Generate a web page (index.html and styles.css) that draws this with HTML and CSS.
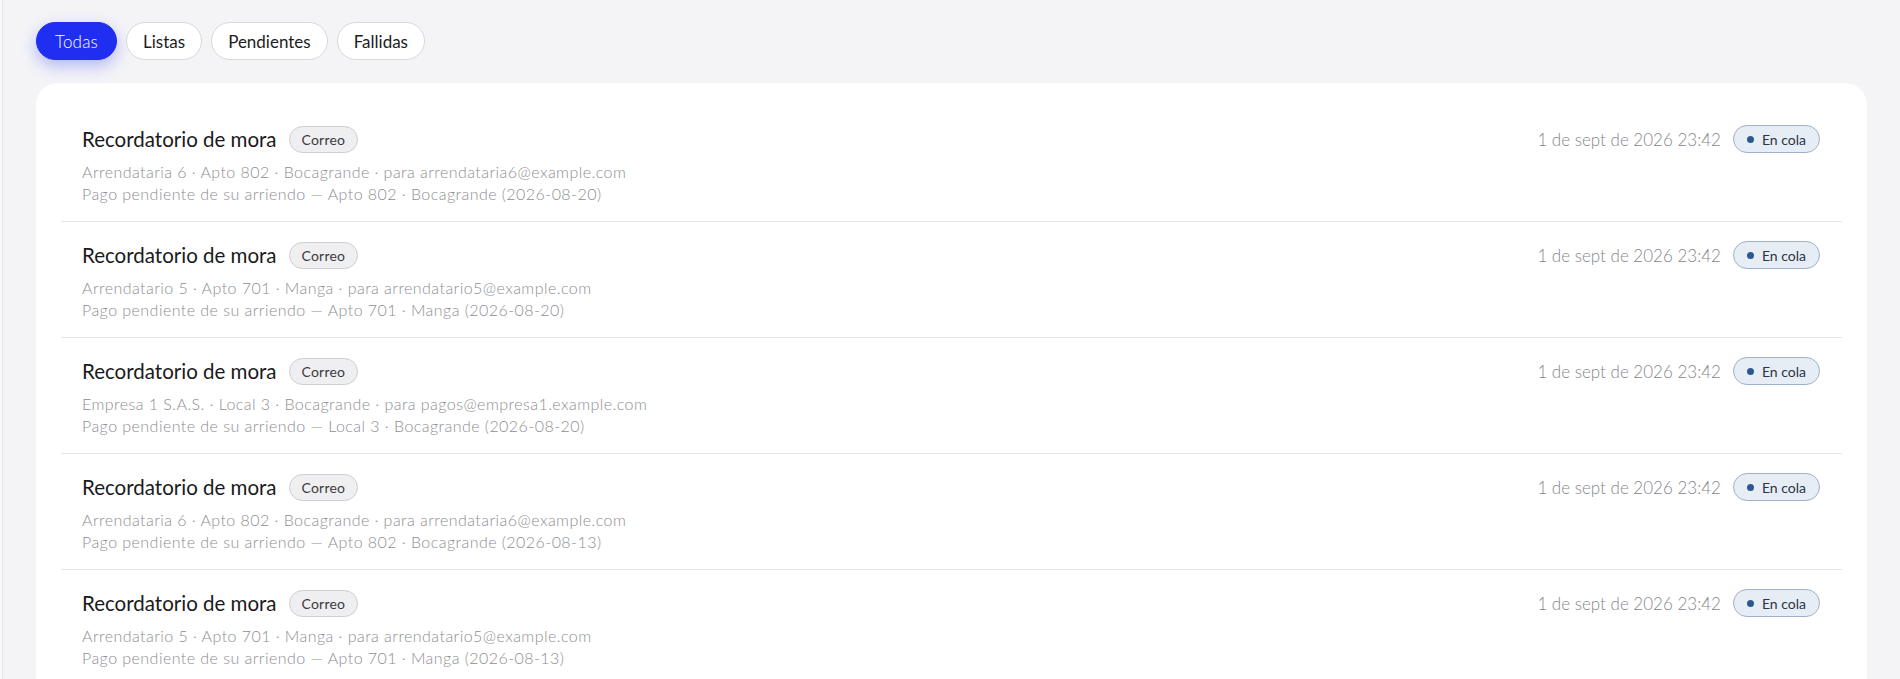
FILE: index.html
```html
<!DOCTYPE html>
<html lang="es">
<head>
<meta charset="utf-8">
<title>Notificaciones</title>
<link rel="stylesheet" href="styles.css">
</head>
<body>
<div class="app">
  <div class="edge"></div>
  <main class="main">
    <nav class="filters">
      <button class="chip chip-active">Todas</button>
      <button class="chip">Listas</button>
      <button class="chip">Pendientes</button>
      <button class="chip">Fallidas</button>
    </nav>
    <section class="card">
      <article class="row">
        <div class="row-main">
          <div class="title-line"><span class="title">Recordatorio de mora</span><span class="tag">Correo</span></div>
          <div class="meta">Arrendataria 6 · Apto 802 · Bocagrande · para arrendataria6@example.com</div>
          <div class="meta">Pago pendiente de su arriendo — Apto 802 · Bocagrande (2026-08-20)</div>
        </div>
        <div class="row-side"><span class="date">1 de sept de 2026 23:42</span><span class="status"><span class="dot"></span>En cola</span></div>
      </article>
      <article class="row">
        <div class="row-main">
          <div class="title-line"><span class="title">Recordatorio de mora</span><span class="tag">Correo</span></div>
          <div class="meta">Arrendatario 5 · Apto 701 · Manga · para arrendatario5@example.com</div>
          <div class="meta">Pago pendiente de su arriendo — Apto 701 · Manga (2026-08-20)</div>
        </div>
        <div class="row-side"><span class="date">1 de sept de 2026 23:42</span><span class="status"><span class="dot"></span>En cola</span></div>
      </article>
      <article class="row">
        <div class="row-main">
          <div class="title-line"><span class="title">Recordatorio de mora</span><span class="tag">Correo</span></div>
          <div class="meta">Empresa 1 S.A.S. · Local 3 · Bocagrande · para pagos@empresa1.example.com</div>
          <div class="meta">Pago pendiente de su arriendo — Local 3 · Bocagrande (2026-08-20)</div>
        </div>
        <div class="row-side"><span class="date">1 de sept de 2026 23:42</span><span class="status"><span class="dot"></span>En cola</span></div>
      </article>
      <article class="row">
        <div class="row-main">
          <div class="title-line"><span class="title">Recordatorio de mora</span><span class="tag">Correo</span></div>
          <div class="meta">Arrendataria 6 · Apto 802 · Bocagrande · para arrendataria6@example.com</div>
          <div class="meta">Pago pendiente de su arriendo — Apto 802 · Bocagrande (2026-08-13)</div>
        </div>
        <div class="row-side"><span class="date">1 de sept de 2026 23:42</span><span class="status"><span class="dot"></span>En cola</span></div>
      </article>
      <article class="row">
        <div class="row-main">
          <div class="title-line"><span class="title">Recordatorio de mora</span><span class="tag">Correo</span></div>
          <div class="meta">Arrendatario 5 · Apto 701 · Manga · para arrendatario5@example.com</div>
          <div class="meta">Pago pendiente de su arriendo — Apto 701 · Manga (2026-08-13)</div>
        </div>
        <div class="row-side"><span class="date">1 de sept de 2026 23:42</span><span class="status"><span class="dot"></span>En cola</span></div>
      </article>
    </section>
  </main>
</div>
</body>
</html>
```
FILE: styles.css
```css
* { box-sizing: border-box; }
html, body { margin: 0; padding: 0; }
body {
  font-family: Lato, "Noto Sans", sans-serif;
  background: #f4f4f7;
  color: #1c1c1e;
}
.app { display: flex; min-height: 100vh; }
.edge { width: 2px; background: #f9f9fb; flex: none; }
.main {
  flex: 1;
  border-left: 1px solid #e3e3e8;
  padding: 22px 33px 40px 33px;
}
.filters { display: flex; gap: 9px; }
.chip {
  font-family: inherit;
  font-size: 17px;
  font-weight: 400;
  height: 38px;
  padding: 0 16px;
  border-radius: 19px;
  border: 1px solid #d8d8dd;
  background: #ffffff;
  color: #1c1c1e;
}
.chip-active {
  background: #1f2ef0;
  border-color: #1f2ef0;
  color: #ffffff;
  font-weight: 300;
  letter-spacing: 0.2px;
  padding: 0 18px;
  box-shadow: 0 6px 16px rgba(40, 55, 245, 0.32);
}
.card {
  margin-top: 23px;
  background: #ffffff;
  border-radius: 22px;
  padding: 23px 25px;
}
.row {
  display: flex;
  justify-content: space-between;
  align-items: flex-start;
  padding: 19px 22px 16px 21px;
  border-bottom: 1px solid #e6e6ea;
}
.title-line { display: flex; align-items: center; gap: 12px; height: 28px; margin-bottom: 8px; }
.title { font-size: 20.5px; font-weight: 400; color: #1a1a1c; }
.tag {
  height: 27px;
  padding: 0 12px;
  border-radius: 14px;
  border: 1px solid #cdcdd2;
  background: #efeff2;
  color: #3a3a3e;
  font-size: 14px;
  letter-spacing: 0.2px;
  display: inline-flex;
  align-items: center;
}
.meta { font-size: 16px; font-weight: 300; letter-spacing: 0.45px; line-height: 22px; color: #8e8e93; }
.row-side { display: flex; align-items: center; gap: 12px; height: 28px; }
.date { font-size: 17px; font-weight: 300; color: #86868c; }
.status {
  height: 28px;
  padding: 0 13px 0 13px;
  border-radius: 14px;
  border: 1px solid #9fb2ca;
  background: #e7edf5;
  color: #2a3446;
  font-size: 14px;
  display: inline-flex;
  align-items: center;
  gap: 8px;
}
.dot { width: 7px; height: 7px; border-radius: 50%; background: #2d5a8e; }
```
